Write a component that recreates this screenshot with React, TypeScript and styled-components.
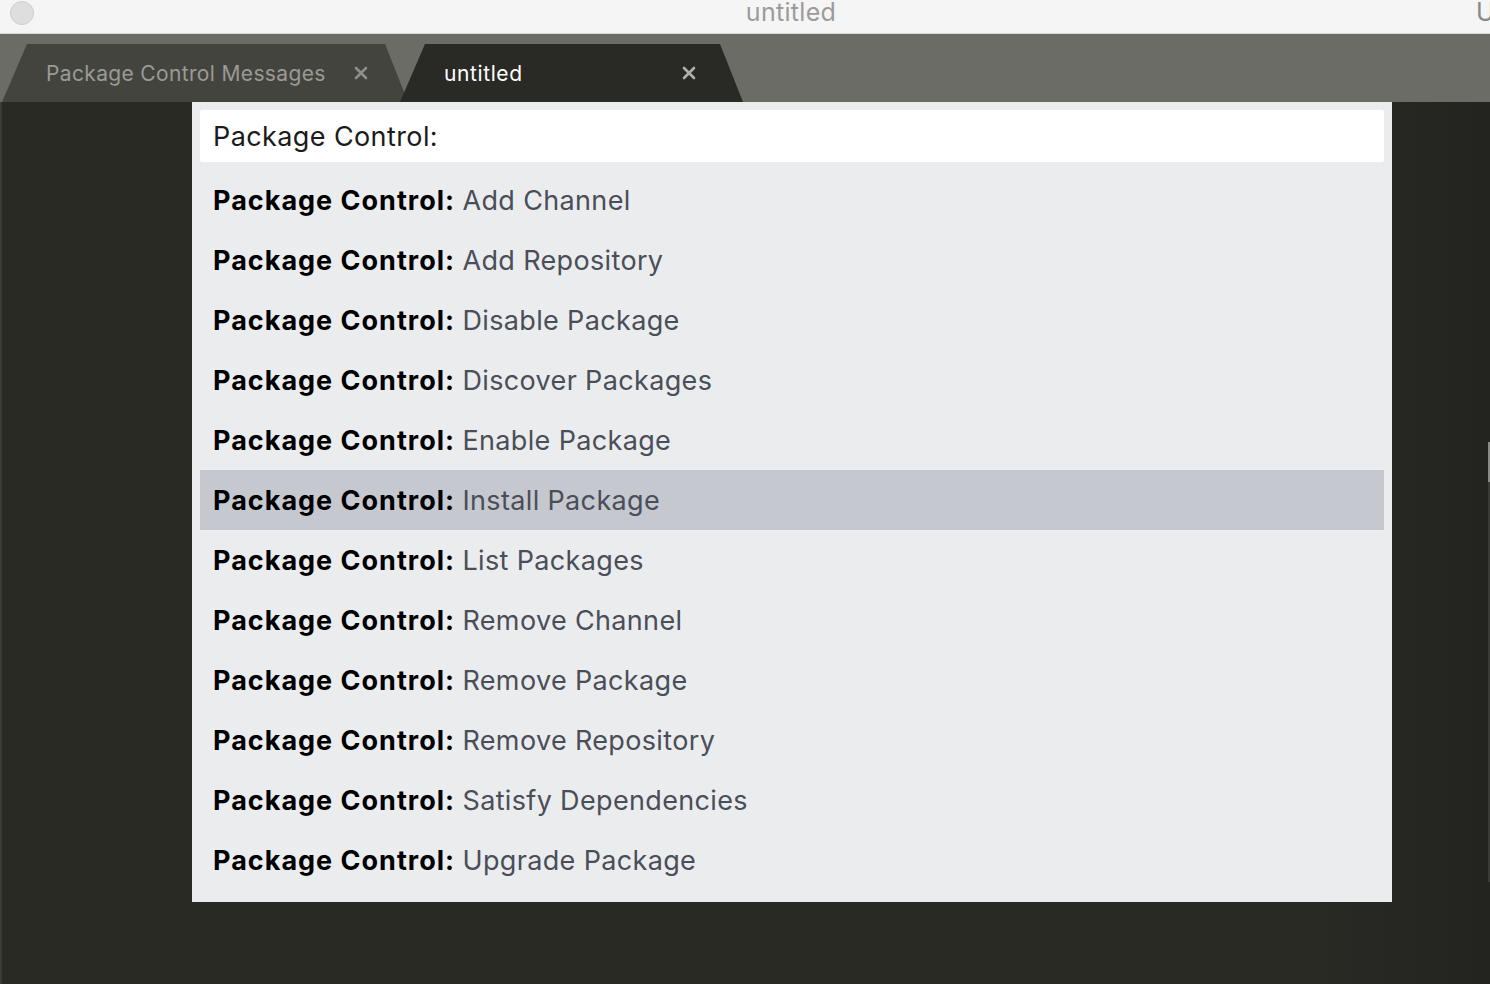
import React from "react";
import styled, { createGlobalStyle } from "styled-components";

const GlobalStyle = createGlobalStyle`
    html, body {
        margin: 0;
        padding: 0;
        background: #2a2a25;
        overflow: hidden;
    }
    body {
        font-family: Inter, "Noto Sans", "Liberation Sans", sans-serif;
    }
`;

const Window = styled.div`
    width: 1490px;
    height: 984px;
    display: flex;
    flex-direction: column;
    overflow: hidden;
`;

const TitleBar = styled.div`
    height: 33px;
    flex-shrink: 0;
    background: #f5f5f5;
    border-bottom: 1px solid #d8d8d8;
    display: flex;
    align-items: flex-start;
    overflow: hidden;
`;

const Light = styled.div`
    width: 22px;
    height: 22px;
    border-radius: 50%;
    background: #dedede;
    border: 1px solid #cdcdcd;
    margin: 1px 0 0 10px;
`;

const WindowTitle = styled.div`
    flex: 1;
    text-align: center;
    font-size: 25px;
    line-height: 26px;
    letter-spacing: 0.3px;
    color: #9b9b9b;
    margin-top: -1px;
    padding-left: 72px;
`;

const EdgeLetter = styled.div`
    font-size: 25px;
    line-height: 26px;
    color: #8a8a8a;
    margin-top: -1px;
    width: 14px;
`;

const TabBar = styled.div`
    height: 68px;
    flex-shrink: 0;
    background: #6c6c66;
    display: flex;
    align-items: flex-end;
    padding-left: 2px;
`;

const Tab = styled.div<{ $active?: boolean; $width: number }>`
    width: ${(p) => p.$width}px;
    height: 58px;
    margin-left: ${(p) => (p.$active ? "-8px" : "0")};
    background: ${(p) => (p.$active ? "#292a25" : "#44443f")};
    clip-path: polygon(25px 0, calc(100% - 23px) 0, 100% 100%, 0 100%);
    border-radius: 6px 6px 0 0;
    display: flex;
    align-items: center;
    padding-left: 44px;
    padding-right: ${(p) => (p.$active ? "47px" : "40px")};
    box-sizing: border-box;
    position: relative;
    z-index: ${(p) => (p.$active ? 2 : 1)};
    font-size: 21px;
    letter-spacing: ${(p) => (p.$active ? "0.6px" : "0.35px")};
    color: ${(p) => (p.$active ? "#ffffff" : "#9a9a96")};
`;

const TabLabel = styled.span`
    flex: 1;
    white-space: nowrap;
`;

const Close = styled.svg`
    width: 14px;
    height: 14px;
    flex-shrink: 0;
`;

const Editor = styled.div`
    flex: 1;
    position: relative;
    background: linear-gradient(to right, #2a2a25 0%, #2a2a25 88%, #23241f 100%);
    border-left: 2px solid #3a3a35;
`;

const Palette = styled.div`
    width: 1200px;
    margin-left: 190px;
    background: #ebecee;
    padding: 8px 8px 12px;
    box-sizing: border-box;
    display: flex;
    flex-direction: column;
    gap: 8px;
`;

const Input = styled.div`
    height: 52px;
    background: #ffffff;
    border-radius: 2px;
    display: flex;
    align-items: center;
    padding-left: 13px;
    font-size: 27px;
    letter-spacing: 0.4px;
    color: #1b1b1b;
`;

const List = styled.div`
    display: flex;
    flex-direction: column;
`;

const Row = styled.div<{ $selected?: boolean }>`
    height: 60px;
    display: flex;
    align-items: center;
    padding-left: 13px;
    background: ${(p) => (p.$selected ? "#c6c8d0" : "transparent")};
    font-size: 27px;
    white-space: pre;
`;

const Prefix = styled.span`
    font-weight: 700;
    letter-spacing: 1px;
    color: #000000;
`;

const Command = styled.span`
    letter-spacing: 0.35px;
    color: #4a4e58;
`;

const ScrollThumb = styled.div`
    position: absolute;
    right: 0;
    top: 340px;
    width: 2px;
    height: 400px;
    background: #3a3a36;
    border-top: 40px solid #8a8a86;
`;

const commands = [
    "Add Channel",
    "Add Repository",
    "Disable Package",
    "Discover Packages",
    "Enable Package",
    "Install Package",
    "List Packages",
    "Remove Channel",
    "Remove Package",
    "Remove Repository",
    "Satisfy Dependencies",
    "Upgrade Package",
];

const CloseIcon = ({ color }: { color: string }) => (
    <Close viewBox="0 0 14 14">
        <path d="M2 2 L12 12 M12 2 L2 12" stroke={color} strokeWidth="2.6" strokeLinecap="round" />
    </Close>
);

const App: React.FC = () => {
    return (
        <>
            <GlobalStyle />
            <Window>
                <TitleBar>
                    <Light />
                    <WindowTitle>untitled</WindowTitle>
                    <EdgeLetter>U</EdgeLetter>
                </TitleBar>
                <TabBar>
                    <Tab $width={406}>
                        <TabLabel>Package Control Messages</TabLabel>
                        <CloseIcon color="#8d8d89" />
                    </Tab>
                    <Tab $active $width={343}>
                        <TabLabel>untitled</TabLabel>
                        <CloseIcon color="#b0b0ac" />
                    </Tab>
                </TabBar>
                <Editor>
                    <Palette>
                        <Input>Package Control:</Input>
                        <List>
                            {commands.map((c) => (
                                <Row key={c} $selected={c === "Install Package"}>
                                    <Prefix>Package Control: </Prefix>
                                    <Command>{c}</Command>
                                </Row>
                            ))}
                        </List>
                    </Palette>
                    <ScrollThumb />
                </Editor>
            </Window>
        </>
    );
};

export default App;
